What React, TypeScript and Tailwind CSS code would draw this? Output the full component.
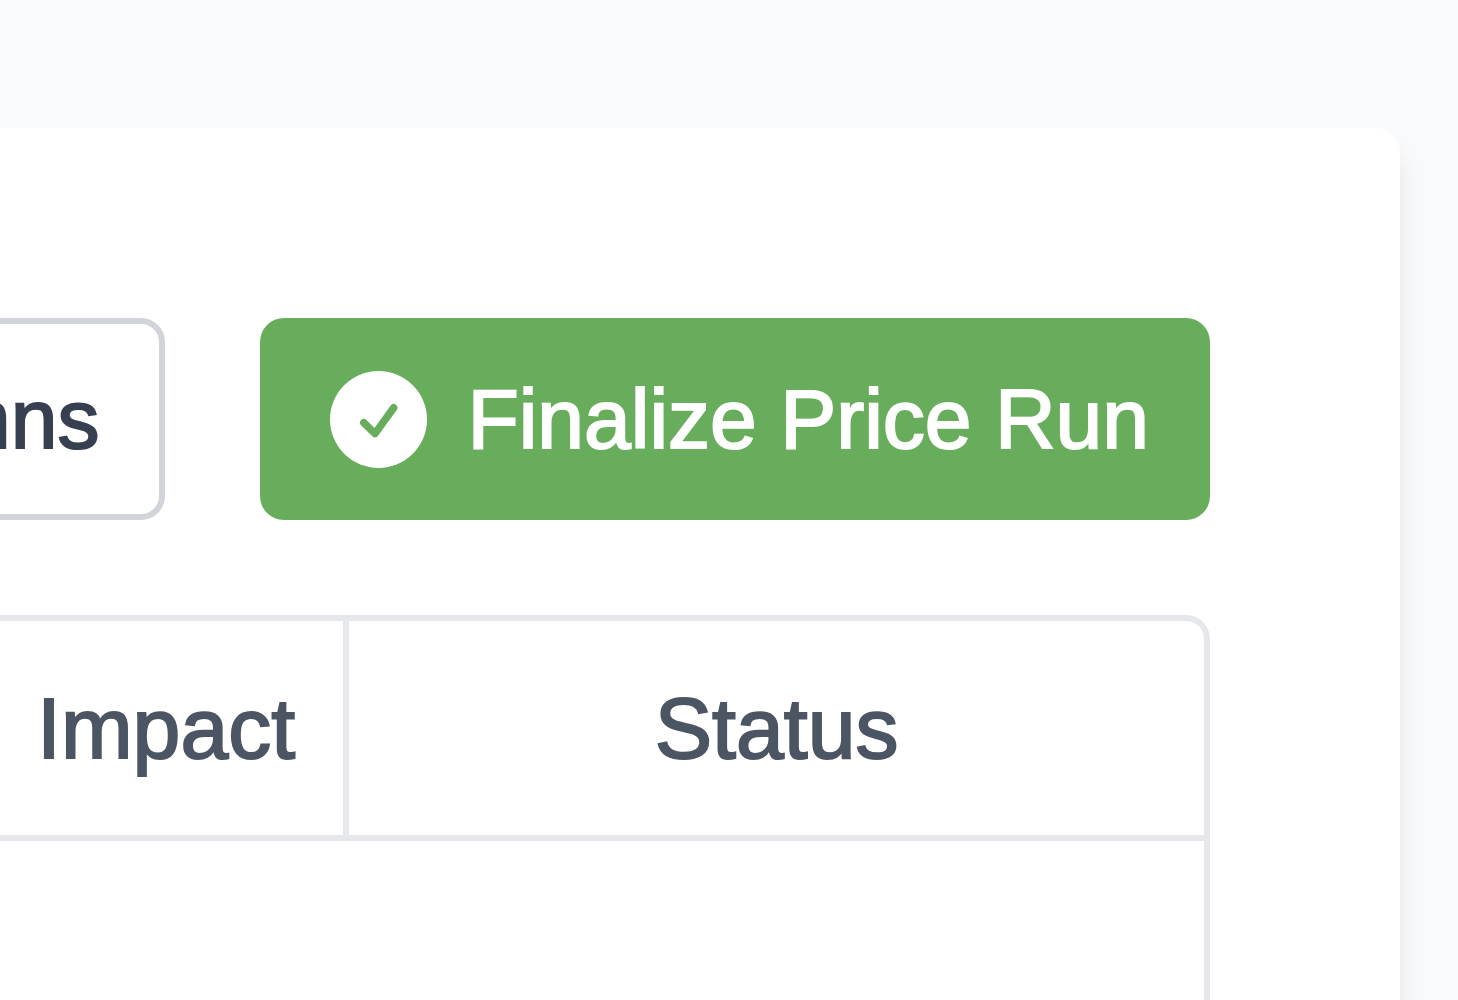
import React from 'react'

const CheckIcon = () => {
    return (
        <svg
            viewBox="0 0 97 97"
            fill="none"
            aria-hidden="true"
            className="size-[97px] shrink-0"
        >
            <circle cx="48.5" cy="48.5" r="48.5" fill="white" />
            <path
                d="M33.8 51.7 L45 62.6 L63.7 36.7"
                stroke="#68ad5c"
                strokeWidth="7.5"
                strokeLinecap="round"
                strokeLinejoin="round"
            />
        </svg>
    );
};

const PriceRun = () => {
    return (
        <div className="h-screen flex flex-col overflow-hidden bg-[#f9fafc] pt-32 pr-[58px] font-['Liberation_Sans',Arial,sans-serif] text-[84px] leading-[120px]">
            <main className="-mb-24 flex-1 flex flex-col rounded-tr-3xl bg-white pt-[190px] pr-[190px] shadow-[0_24px_36px_-6px_rgba(0,0,0,0.1),0_12px_24px_-12px_rgba(0,0,0,0.1)]">
                {/* Actions */}
                <div className="flex justify-end gap-[95px]">
                    <button
                        type="button"
                        className="flex h-[202px] shrink-0 items-center rounded-3xl border-[6px] border-[#d1d5da] bg-white px-[60px] text-[#374050] [-webkit-text-stroke:2px_#374050]"
                    >
                        Columns
                    </button>
                    <button
                        type="button"
                        className="flex h-[202px] shrink-0 items-center gap-10 whitespace-nowrap rounded-3xl bg-[#68ad5c] pl-[70px] pr-[61px] text-white [-webkit-text-stroke:2px_white]"
                    >
                        <CheckIcon />
                        Finalize Price Run
                    </button>
                </div>

                {/* Results */}
                <div className="mt-[95px] flex-1 rounded-tr-3xl border-t-[6px] border-r-[6px] border-[#e5e7eb]">
                    <table className="w-full table-fixed border-separate border-spacing-0 text-[86px] text-[#4c5563]">
                        <thead>
                            <tr className="h-[220px] [-webkit-text-stroke:2px_#4c5563]">
                                <th scope="col" className="border-r-[6px] border-b-[6px] border-[#e5e7eb] pr-12 text-right font-normal">
                                    Impact
                                </th>
                                <th scope="col" className="w-[71%] border-b-[6px] border-[#e5e7eb] text-center font-normal">
                                    Status
                                </th>
                            </tr>
                        </thead>
                    </table>
                </div>
            </main>
        </div>
    );
};

export default PriceRun
